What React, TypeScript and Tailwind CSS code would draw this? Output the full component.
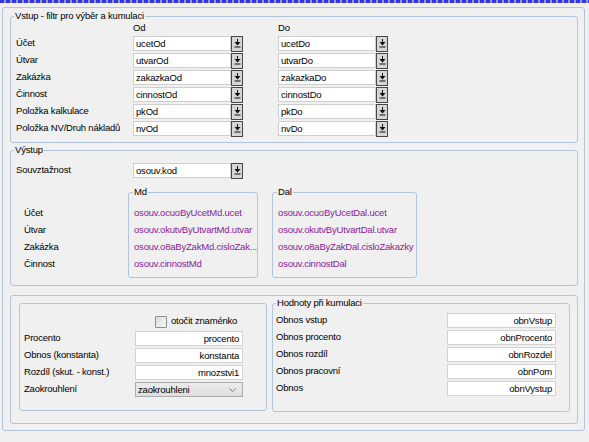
import type { ReactNode } from 'react';

const groupBorder = 'border border-[#b1c5dc] rounded-[3px]';

function LookupIcon() {
  return (
    <svg width="7" height="9" viewBox="0 0 7 9" className="block">
      <rect x="3" y="0" width="1" height="3" fill="#111" />
      <polygon points="0.5,3 6.5,3 3.5,6.5" fill="#111" />
      <rect x="0.5" y="7.5" width="6" height="1" fill="#111" />
    </svg>
  );
}

function LookupField({ value }: { value: string }) {
  return (
    <div className="flex h-[15px] w-[110px]">
      <div className="flex-1 h-full bg-white border border-[#cfcfcf] pl-[2px] leading-[13px] whitespace-nowrap overflow-hidden">
        {value}
      </div>
      <div className="w-[12px] h-[16px] -mt-[0.5px] flex items-center justify-center bg-[#d6d6d6] border border-[#474747]">
        <LookupIcon />
      </div>
    </div>
  );
}

function TextBox({ value, width }: { value: string; width: string }) {
  return (
    <div className={`${width} h-[15px] bg-white border border-[#d2d2d2] pr-[3px] text-right leading-[13px] whitespace-nowrap overflow-hidden`}>
      {value}
    </div>
  );
}

function Legend({ children, offset }: { children: ReactNode; offset: string }) {
  return <legend className={`${offset} px-[1px] leading-[12px]`}>{children}</legend>;
}

const filterRows = [
  ['Účet', 'ucetOd', 'ucetDo'],
  ['Útvar', 'utvarOd', 'utvarDo'],
  ['Zakázka', 'zakazkaOd', 'zakazkaDo'],
  ['Činnost', 'cinnostOd', 'cinnostDo'],
  ['Položka kalkulace', 'pkOd', 'pkDo'],
  ['Položka NV/Druh nákladů', 'nvOd', 'nvDo'],
];

const outputLabels = ['Účet', 'Útvar', 'Zakázka', 'Činnost'];
const mdValues = [
  'osouv.ocuoByUcetMd.ucet',
  'osouv.okutvByUtvartMd.utvar',
  'osouv.o8aByZakMd.cisloZak...',
  'osouv.cinnostMd',
];
const dalValues = [
  'osouv.ocuoByUcetDal.ucet',
  'osouv.okutvByUtvartDal.utvar',
  'osouv.o8aByZakDal.cisloZakazky',
  'osouv.cinnostDal',
];

const cumulationRows = [
  ['Obnos vstup', 'obnVstup'],
  ['Obnos procento', 'obnProcento'],
  ['Obnos rozdíl', 'obnRozdel'],
  ['Obnos pracovní', 'obnPom'],
  ['Obnos', 'obnVystup'],
];

export default function App() {
  return (
    <div className="w-[589px] h-[442px] bg-[#f0f0f0] text-black text-[9.5px] tracking-[-0.2px] font-['Liberation_Sans',Arial,sans-serif] overflow-hidden">
      <div className="h-[3px] w-full bg-[repeating-linear-gradient(90deg,#3434ee_0px,#3434ee_4px,#9a9aae_4px,#9a9aae_6px)]" />

      <div className={`ml-[2px] mt-[4px] w-[583px] h-[424px] ${groupBorder} pl-[7px] pt-[2px]`}>
        {/* Vstup - filtr */}
        <fieldset className={`w-[568px] h-[133px] ${groupBorder}`}>
          <Legend offset="ml-[3px]">Vstup - filtr pro výběr a kumulaci</Legend>
          <div className="pl-[5px]">
            <div className="flex h-[12px] leading-[12px] mb-[2px]">
              <div className="w-[117px]" />
              <div className="w-[110px]">Od</div>
              <div className="w-[35px]" />
              <div className="w-[110px]">Do</div>
            </div>
            <div className="flex flex-col gap-[2px]">
              {filterRows.map(([label, od, doValue]) => (
                <div key={label} className="flex items-center h-[15px]">
                  <div className="w-[117px] whitespace-nowrap">{label}</div>
                  <LookupField value={od} />
                  <div className="w-[35px]" />
                  <LookupField value={doValue} />
                </div>
              ))}
            </div>
          </div>
        </fieldset>

        {/* Výstup */}
        <fieldset className={`mt-[1px] w-[568px] h-[142px] ${groupBorder}`}>
          <Legend offset="ml-[3px]">Výstup</Legend>
          <div className="flex items-center h-[15px] mt-[7px] pl-[5px]">
            <div className="w-[117px]">Souvztažnost</div>
            <LookupField value="osouv.kod" />
          </div>
          <div className="flex mt-[8px]">
            <div className="w-[117px] pl-[13px] pt-[18px]">
              {outputLabels.map((l) => (
                <div key={l} className="h-[17px] leading-[17px]">
                  {l}
                </div>
              ))}
            </div>
            <fieldset className={`w-[130px] h-[92px] ${groupBorder}`}>
              <Legend offset="ml-[4px]">Md</Legend>
              <div className="pt-[6px] pl-[5px] text-[#8b1a9b]">
                {mdValues.map((v) => (
                  <div key={v} className="h-[17px] leading-[17px] whitespace-nowrap overflow-hidden">
                    {v}
                  </div>
                ))}
              </div>
            </fieldset>
            <div className="w-[14px]" />
            <fieldset className={`w-[145px] h-[92px] ${groupBorder}`}>
              <Legend offset="ml-[4px]">Dal</Legend>
              <div className="pt-[6px] pl-[5px] text-[#8b1a9b]">
                {dalValues.map((v) => (
                  <div key={v} className="h-[17px] leading-[17px] whitespace-nowrap overflow-hidden">
                    {v}
                  </div>
                ))}
              </div>
            </fieldset>
          </div>
        </fieldset>

        {/* Bottom block */}
        <div className={`mt-[9px] w-[568px] h-[129px] ${groupBorder} flex items-start pl-[8px]`}>
          <div className={`mt-[7px] w-[248px] h-[108px] ${groupBorder} pl-[4px] pt-[10px]`}>
            <div className="flex items-center h-[15px] mb-[2px]">
              <div className="w-[131px]" />
              <div className="w-[12px] h-[12px] border border-[#8e8f8f] rounded-[1px] bg-[linear-gradient(135deg,#dcdcdc,#f8f8f8)]" />
              <div className="ml-[4px]">otočit znaménko</div>
            </div>
            <div className="flex flex-col gap-[2px]">
              {[
                ['Procento', 'procento'],
                ['Obnos (konstanta)', 'konstanta'],
                ['Rozdíl (skut. - konst.)', 'mnozstvi1'],
              ].map(([label, value]) => (
                <div key={label} className="flex items-center h-[15px]">
                  <div className="w-[111px] whitespace-nowrap">{label}</div>
                  <TextBox value={value} width="w-[108px]" />
                </div>
              ))}
              <div className="flex items-center h-[15px]">
                <div className="w-[111px]">Zaokrouhlení</div>
                <div className="w-[108px] h-[15px] flex items-center justify-between border border-[#acacac] bg-[linear-gradient(#ececec,#dedede)] pl-[2px] pr-[6px] leading-[13px]">
                  <span>zaokrouhleni</span>
                  <svg width="7" height="4" viewBox="0 0 7 4">
                    <polyline points="0.5,0.5 3.5,3.5 6.5,0.5" fill="none" stroke="#7a7a7a" strokeWidth="1" />
                  </svg>
                </div>
              </div>
            </div>
          </div>
          <div className="w-[5px]" />
          <fieldset className={`mt-[1px] w-[298px] h-[115px] ${groupBorder}`}>
            <Legend offset="ml-[3px]">Hodnoty při kumulaci</Legend>
            <div className="pt-[4px] pl-[3px] flex flex-col gap-[2px]">
              {cumulationRows.map(([label, value]) => (
                <div key={label} className="flex items-center h-[15px]">
                  <div className="w-[171px]">{label}</div>
                  <TextBox value={value} width="w-[109px]" />
                </div>
              ))}
            </div>
          </fieldset>
        </div>
      </div>
    </div>
  );
}
